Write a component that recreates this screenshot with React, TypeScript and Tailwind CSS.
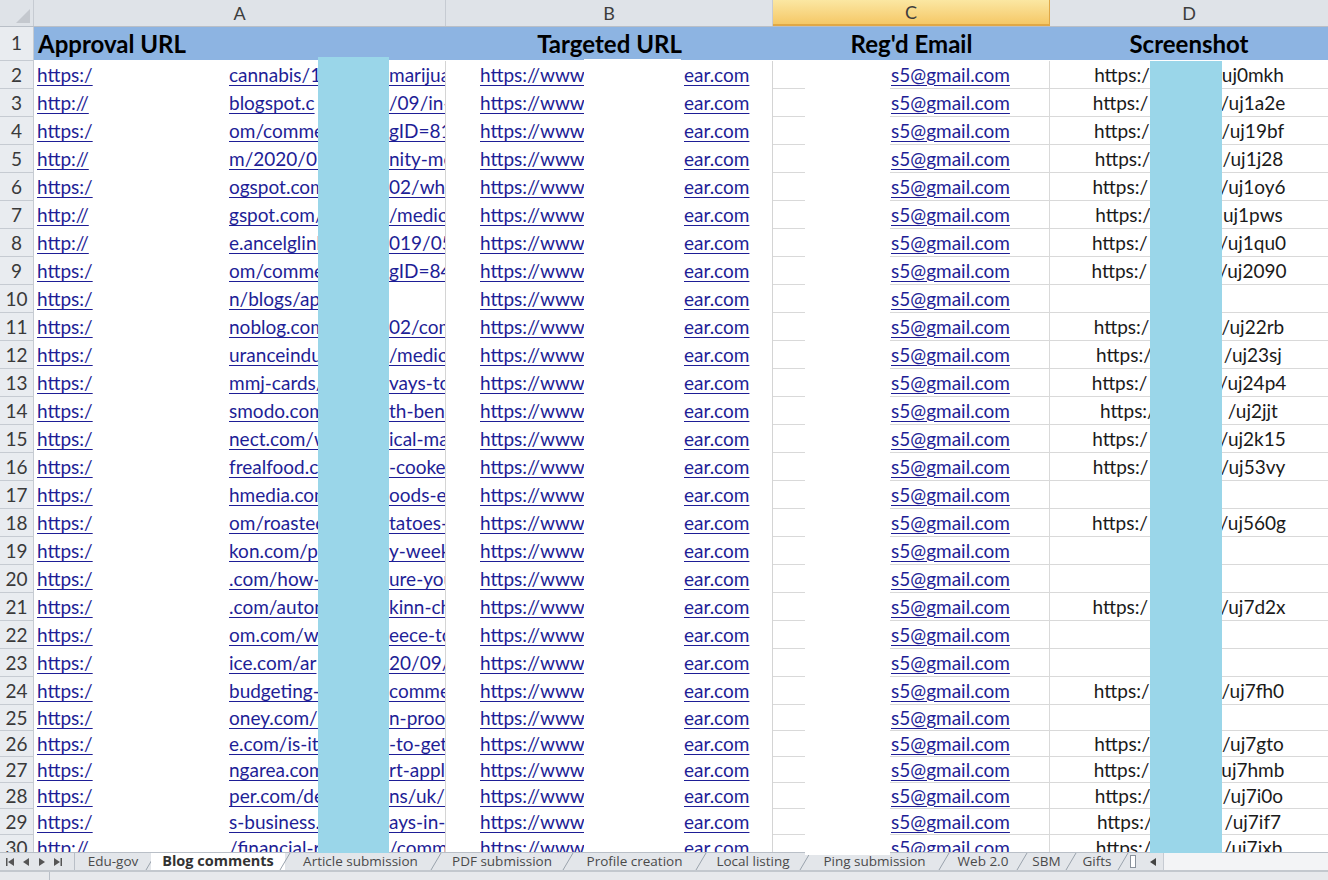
import React from 'react';

type Row = {
  n: number;
  a1: string;
  a2: string;
  a3: string;
  d1?: string;
  d2?: string;
};

const rows: Row[] = [
  { n: 2, a1: 'https:/', a2: 'cannabis/1', a3: 'marijua', d1: 'https:/', d2: 'uj0mkh' },
  { n: 3, a1: 'http://', a2: 'blogspot.c', a3: '/09/in-', d1: 'https:/', d2: '/uj1a2e' },
  { n: 4, a1: 'https:/', a2: 'om/comme', a3: 'gID=815', d1: 'https:/', d2: '/uj19bf' },
  { n: 5, a1: 'http://', a2: 'm/2020/07', a3: 'nity-me', d1: 'https:/', d2: '/uj1j28' },
  { n: 6, a1: 'https:/', a2: 'ogspot.com', a3: '02/whil', d1: 'https:/', d2: '/uj1oy6' },
  { n: 7, a1: 'http://', a2: 'gspot.com/', a3: '/medic', d1: 'https:/', d2: 'uj1pws' },
  { n: 8, a1: 'http://', a2: 'e.ancelglink', a3: '019/05/', d1: 'https:/', d2: '/uj1qu0' },
  { n: 9, a1: 'https:/', a2: 'om/comme', a3: 'gID=840', d1: 'https:/', d2: '/uj2090' },
  { n: 10, a1: 'https:/', a2: 'n/blogs/apo', a3: '' },
  { n: 11, a1: 'https:/', a2: 'noblog.com', a3: '02/com', d1: 'https:/', d2: '/uj22rb' },
  { n: 12, a1: 'https:/', a2: 'uranceindu', a3: '/medic', d1: 'https:/', d2: '/uj23sj' },
  { n: 13, a1: 'https:/', a2: 'mmj-cards/', a3: 'vays-to', d1: 'https:/', d2: '/uj24p4' },
  { n: 14, a1: 'https:/', a2: 'smodo.com', a3: 'th-bene', d1: 'https:/', d2: '/uj2jjt' },
  { n: 15, a1: 'https:/', a2: 'nect.com/w', a3: 'ical-ma', d1: 'https:/', d2: '/uj2k15' },
  { n: 16, a1: 'https:/', a2: 'frealfood.c', a3: '-cooke', d1: 'https:/', d2: '/uj53vy' },
  { n: 17, a1: 'https:/', a2: 'hmedia.com', a3: 'oods-ea' },
  { n: 18, a1: 'https:/', a2: 'om/roasted', a3: 'tatoes-', d1: 'https:/', d2: '/uj560g' },
  { n: 19, a1: 'https:/', a2: 'kon.com/p', a3: 'y-week' },
  { n: 20, a1: 'https:/', a2: '.com/how-t', a3: 'ure-you' },
  { n: 21, a1: 'https:/', a2: '.com/auton', a3: 'kinn-ch', d1: 'https:/', d2: '/uj7d2x' },
  { n: 22, a1: 'https:/', a2: 'om.com/wo', a3: 'eece-to' },
  { n: 23, a1: 'https:/', a2: 'ice.com/ar', a3: '20/09/' },
  { n: 24, a1: 'https:/', a2: 'budgeting-v', a3: 'comme', d1: 'https:/', d2: '/uj7fh0' },
  { n: 25, a1: 'https:/', a2: 'oney.com/r', a3: 'n-proof' },
  { n: 26, a1: 'https:/', a2: 'e.com/is-it-', a3: '-to-get', d1: 'https:/', d2: '/uj7gto' },
  { n: 27, a1: 'https:/', a2: 'ngarea.com', a3: 'rt-appl', d1: 'https:/', d2: 'uj7hmb' },
  { n: 28, a1: 'https:/', a2: 'per.com/de', a3: 'ns/uk/1', d1: 'https:/', d2: '/uj7i0o' },
  { n: 29, a1: 'https:/', a2: 's-business.', a3: 'ays-in-', d1: 'https:/', d2: '/uj7if7' },
  { n: 30, a1: 'http://', a2: '/financial-r', a3: '/comm', d1: 'https:/', d2: '/uj7ixb' },
];

const tabs = [
  { name: 'Edu-gov', w: 'w-[76px]' },
  { name: 'Blog comments', w: 'w-[134px]', active: true },
  { name: 'Article submission', w: 'w-[151px]' },
  { name: 'PDF submission', w: 'w-[132px]' },
  { name: 'Profile creation', w: 'w-[133px]' },
  { name: 'Local listing', w: 'w-[104px]' },
  { name: 'Ping submission', w: 'w-[139px]' },
  { name: 'Web 2.0', w: 'w-[78px]' },
  { name: 'SBM', w: 'w-[49px]' },
  { name: 'Gifts', w: 'w-[52px]' },
];

const link = 'text-[#1e1e96] underline decoration-1 underline-offset-[3px] whitespace-nowrap';

function RowHead({ n, h }: { n: number; h: string }) {
  return (
    <div className={`${h} w-[34px] shrink-0 bg-[#e9ecf0] border-r border-b border-[#c6cbd2] flex items-center justify-center text-[19px] text-[#3a3a3a]`}>
      {n}
    </div>
  );
}

export default function App() {
  return (
    <div className="relative w-[1328px] h-[880px] overflow-hidden bg-white font-['Lato',sans-serif] text-[#1a1a1a]">
      <div className="h-[852px] overflow-hidden">
        {/* column letters */}
        <div className="flex h-[27px] bg-[#dfe3e8] border-b border-[#b9bfc7] text-[18px] text-[#3d3d3d]">
          <div className="w-[34px] shrink-0 border-r border-[#c6cbd2] relative">
            <svg className="absolute right-[3px] bottom-[3px]" width="14" height="14" viewBox="0 0 14 14">
              <polygon points="14,0 14,14 0,14" fill="#c4c8ce" />
            </svg>
          </div>
          <div className="w-[412px] shrink-0 border-r border-[#c6cbd2] flex items-center justify-center">A</div>
          <div className="w-[327px] shrink-0 border-r border-[#c6cbd2] flex items-center justify-center">B</div>
          <div className="w-[277px] shrink-0 border-r border-b-2 border-[#e0a846] bg-gradient-to-b from-[#fbe7a2] to-[#f5c866] flex items-center justify-center">C</div>
          <div className="flex-1 flex items-center justify-center">D</div>
        </div>

        {/* header row */}
        <div className="flex h-[34px]">
          <RowHead n={1} h="h-[34px]" />
          <div className="flex-1 flex bg-[#8db4e2] font-bold text-[24px] text-black border-b border-white">
            <div className="w-[412px] shrink-0 pl-[4px] flex items-center">Approval URL</div>
            <div className="w-[327px] shrink-0 flex items-center justify-center">Targeted URL</div>
            <div className="w-[277px] shrink-0 flex items-center justify-center">Reg'd Email</div>
            <div className="flex-1 flex items-center justify-center">Screenshot</div>
          </div>
        </div>

        {rows.map((r) => {
          const h = r.n <= 24 ? 'h-[28px]' : 'h-[26px]';
          return (
            <div key={r.n} className={`flex ${h} text-[19px] leading-[26px]`}>
              <RowHead n={r.n} h={h} />
              <div className="w-[412px] shrink-0 border-r border-[#d4d4d4] flex items-center pl-[3px] overflow-hidden">
                <span className="w-[192px] shrink-0 overflow-hidden">
                  <span className={link}>{r.a1}</span>
                </span>
                <span className="w-[89px] shrink-0 overflow-hidden">
                  <span className={link}>{r.a2}</span>
                </span>
                <span className="w-[71px] shrink-0" />
                <span className="flex-1 overflow-hidden">
                  <span className={link}>{r.a3}</span>
                </span>
              </div>
              <div className="w-[327px] shrink-0 border-r border-[#d4d4d4] flex items-center pl-[34px]">
                <span className="w-[104px] shrink-0 overflow-hidden">
                  <span className={link}>https://www</span>
                </span>
                <span className="w-[100px] shrink-0" />
                <span className={link}>ear.com</span>
              </div>
              <div className="w-[277px] shrink-0 border-r border-b border-[#d9d9d9] flex items-center pl-[118px]">
                <span className={link}>s5@gmail.com</span>
              </div>
              <div className="flex-1 border-b border-[#d9d9d9] flex items-center justify-center">
                {r.d1 && (
                  <>
                    <span className="whitespace-nowrap">{r.d1}</span>
                    <span className="w-[72px] shrink-0" />
                    <span className="whitespace-nowrap">{r.d2}</span>
                  </>
                )}
              </div>
            </div>
          );
        })}
      </div>

      {/* sheet tabs */}
      <div className="flex h-[18px] bg-[#e3e6ea] border-t border-[#b9bfc7] font-['Open_Sans',sans-serif] text-[13.5px] text-[#4a4a4a]">
        <div className="w-[75px] shrink-0 flex items-center justify-around pl-[2px] pr-[8px] text-[#555] border-r border-[#b9bfc7]">
          <svg width="10" height="10" viewBox="0 0 10 10"><rect x="1" y="1" width="1.5" height="8" fill="#555" /><polygon points="9,1 9,9 3,5" fill="#555" /></svg>
          <svg width="10" height="10" viewBox="0 0 10 10"><polygon points="8,1 8,9 2,5" fill="#555" /></svg>
          <svg width="10" height="10" viewBox="0 0 10 10"><polygon points="2,1 2,9 8,5" fill="#555" /></svg>
          <svg width="10" height="10" viewBox="0 0 10 10"><polygon points="1,1 1,9 7,5" fill="#555" /><rect x="7.5" y="1" width="1.5" height="8" fill="#555" /></svg>
        </div>
        {tabs.map((t) => (
          <div
            key={t.name}
            className={`${t.w} shrink-0 relative flex items-center justify-center leading-none whitespace-nowrap ${t.active ? 'bg-white font-bold text-[14.5px] text-[#333]' : ''}`}
          >
            {t.name}
            <svg className="absolute right-[-6px] top-0" width="12" height="18" viewBox="0 0 12 18">
              <line x1="11" y1="0" x2="1" y2="17" stroke="#9aa2ac" strokeWidth="1" />
            </svg>
          </div>
        ))}
        <div className="w-[20px] shrink-0 flex items-center justify-center">
          <div className="w-[6px] h-[13px] border border-[#8a929c] bg-white" />
        </div>
        <div className="w-[20px] shrink-0 flex items-center justify-center">
          <svg width="8" height="10" viewBox="0 0 8 10"><polygon points="7,1 7,9 1,5" fill="#444" /></svg>
        </div>
        <div className="flex-1 bg-[#f3f4f6] border-l border-[#c6cbd2]" />
      </div>
      <div className="flex h-[10px] bg-[#e7e9ec] border-t-2 border-[#c3c8ce]">
        <div className="w-[50px] border-r border-[#b9bfc7]" />
      </div>

      {/* redaction boxes */}
      <div className="absolute left-[318px] top-[57px] w-[71px] h-[796px] bg-[#9ad6e9]" />
      <div className="absolute left-[584px] top-[59px] w-[97px] h-[793px] bg-white" />
      <div className="absolute left-[805px] top-[61px] w-[85px] h-[794px] bg-white" />
      <div className="absolute left-[1150px] top-[61px] w-[72px] h-[792px] bg-[#9ad6e9]" />
    </div>
  );
}
